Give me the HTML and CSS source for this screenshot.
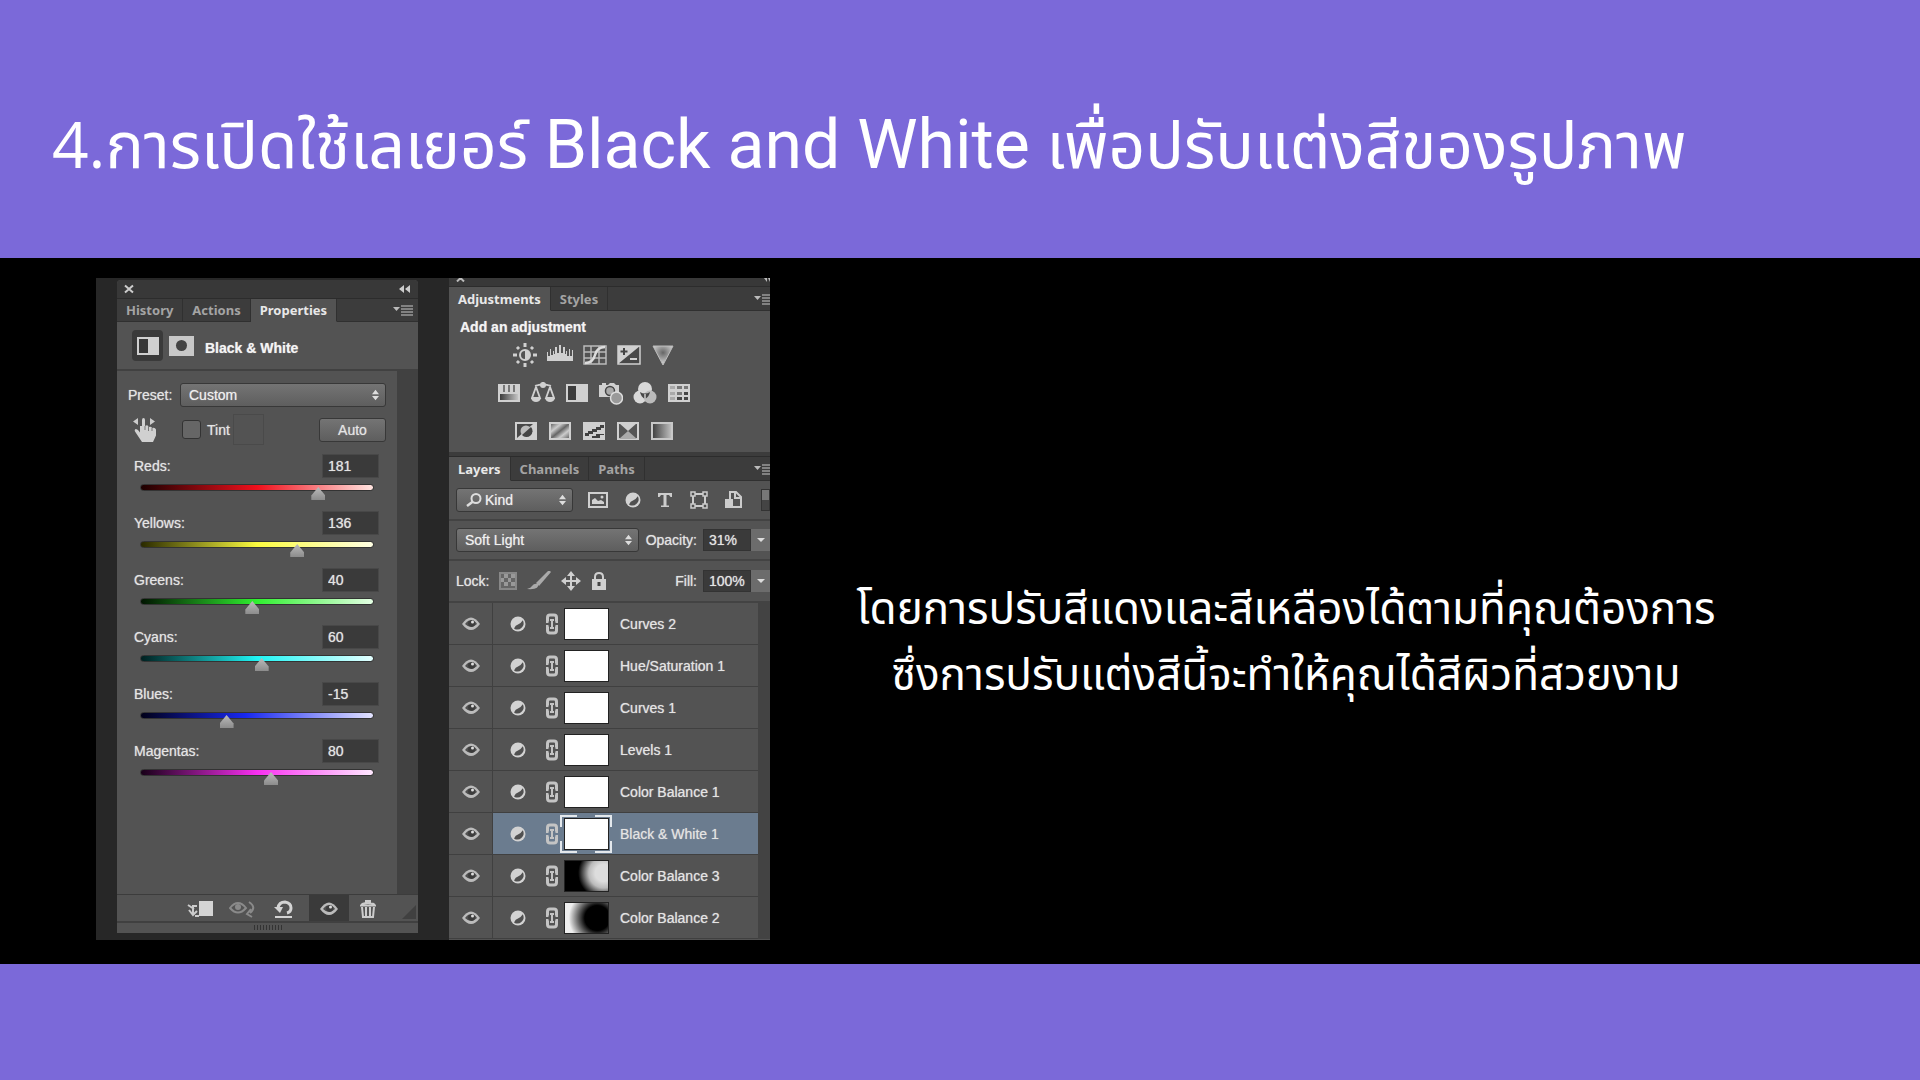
FILE: index.html
```html
<!DOCTYPE html>
<html lang="th">
<head>
<meta charset="utf-8">
<title>Black and White</title>
<link rel="stylesheet" href="styles.css">
</head>
<body>
<svg class="defs" aria-hidden="true">
  <defs>
    <linearGradient id="g-fade"><stop offset="0" stop-color="#3c3c3c"/><stop offset="1" stop-color="#c4c4c4"/></linearGradient>
    <linearGradient id="g-diag" x1="0" y1="0" x2="1" y2="1"><stop offset="0" stop-color="#555"/><stop offset=".3" stop-color="#ccc"/><stop offset=".5" stop-color="#666"/><stop offset=".7" stop-color="#ccc"/><stop offset="1" stop-color="#555"/></linearGradient>
    <radialGradient id="g-tri" cx=".5" cy=".35" r=".6"><stop offset="0" stop-color="#666"/><stop offset="1" stop-color="#d4d4d4"/></radialGradient>
    <symbol id="eye" viewBox="0 0 18 14"><path d="M0 7q9-13 18 0q-9 12-18 0z" fill="#bbb"/><path d="M3 7q2-3 4-3.500v5q2 3 5-1V4q2 1 3 3q-6 6-12 0z" fill="#505050"/><circle cx="9.500" cy="6.500" r="3.400" fill="#3c3c3c"/><circle cx="10.500" cy="5" r="1.500" fill="#ddd"/></symbol>
    <symbol id="adj" viewBox="0 0 16 16"><circle cx="8" cy="8" r="7.500" fill="#d2d2d2"/><path d="M12.800 4.200A6.200 6.200 0 0 1 4 12.400q1.500-3 4-3.800t4.800-4.400z" fill="#505050"/></symbol>
    <symbol id="link" viewBox="0 0 14 22"><path d="M3.500 8.500H2.500V4.500Q2.500 2 5 2h4q2.500 0 2.500 2.500v4h-1M3.500 13.500h-1v4Q2.500 20 5 20h4q2.500 0 2.500-2.500v-4h-1" fill="none" stroke="#c4c4c4" stroke-width="3"/><path d="M7 6v10M5 7h4M5 15h4" stroke="#c4c4c4" stroke-width="2"/></symbol>
    <symbol id="menu" viewBox="0 0 20 14"><path d="M0 4h7L3.500 8z" fill="#bbb"/><path d="M8 3h12M8 6h12M8 9h12M8 12h12" stroke="#999" stroke-width="1.400"/></symbol>
    <symbol id="updown" viewBox="0 0 8 12"><path d="M0 5L4 0l4 5zM0 7h8l-4 5z" fill="#ddd"/></symbol>
  </defs>
</svg>

<header class="banner">
  <h1>4.การเปิดใช้เลเยอร์ <span class="latin">Black and White</span> เพื่อปรับแต่งสีของรูปภาพ</h1>
</header>

<main class="stage">
  <div class="workspace">
    <section class="panel properties">
      <div class="titlebar">
        <button class="bare" aria-label="Close"><svg width="10" height="10" viewBox="0 0 10 10"><path d="M1 1.500l8 7M9 1.500l-8 7" stroke="#ccc" stroke-width="2"/></svg></button>
        <button class="bare" aria-label="Collapse"><svg width="12" height="8" viewBox="0 0 12 8"><path d="M5 0v8L0 4zM11 0v8L6 4z" fill="#ccc"/></svg></button>
      </div>
      <nav class="tabs">
        <button>History</button><button>Actions</button><button class="active">Properties</button>
        <button class="menu" aria-label="Menu"><svg width="20" height="14"><use href="#menu"/></svg></button>
      </nav>
      <div class="kind">
        <span class="well"><svg width="24" height="20" viewBox="0 0 24 20"><rect x="1" y="1" width="22" height="18" fill="#d0d0d0"/><rect x="3" y="3" width="9" height="14" fill="#383838"/></svg></span>
        <svg width="25" height="20" viewBox="0 0 25 20"><rect width="25" height="20" fill="#c8c8c8"/><circle cx="12.500" cy="9.500" r="5.500" fill="#444"/></svg>
        <h2>Black &amp; White</h2>
      </div>
      <div class="scroller">
        <div class="controls">
          <div class="row preset">
            <label for="preset">Preset:</label>
            <span class="select"><select id="preset"><option>Custom</option></select><svg width="7" height="12"><use href="#updown"/></svg></span>
          </div>
          <div class="row tint">
            <svg class="hand" width="24" height="26" viewBox="0 0 24 26"><path d="M5 1v7L0 4.500zM17 1v7l5-3.500z" fill="#ccc"/><path d="M9 14V3q0-2 1.500-2T12 3v6q3-2 3.500 1 3-1 3.500 1 3-1 4 1.500v6l-3 6.500H9L2 14.500q-1-2 1-2.500 2 0 4 3.500V9h2z" fill="#d0d0d0"/><path d="M12 9v4M15.500 10v4M19 11v3" stroke="#777"/></svg>
            <label class="check"><input type="checkbox">Tint</label>
            <span class="swatch"></span>
            <button class="auto">Auto</button>
          </div>
          <div class="channel reds"><label for="reds">Reds:</label><input id="reds" type="text" value="181"><div class="slider"><span class="track"></span><input type="range" aria-label="Reds level" min="-200" max="300" value="181"></div></div>
          <div class="channel yellows"><label for="yellows">Yellows:</label><input id="yellows" type="text" value="136"><div class="slider"><span class="track"></span><input type="range" aria-label="Yellows level" min="-200" max="300" value="136"></div></div>
          <div class="channel greens"><label for="greens">Greens:</label><input id="greens" type="text" value="40"><div class="slider"><span class="track"></span><input type="range" aria-label="Greens level" min="-200" max="300" value="40"></div></div>
          <div class="channel cyans"><label for="cyans">Cyans:</label><input id="cyans" type="text" value="60"><div class="slider"><span class="track"></span><input type="range" aria-label="Cyans level" min="-200" max="300" value="60"></div></div>
          <div class="channel blues"><label for="blues">Blues:</label><input id="blues" type="text" value="-15"><div class="slider"><span class="track"></span><input type="range" aria-label="Blues level" min="-200" max="300" value="-15"></div></div>
          <div class="channel magentas"><label for="magentas">Magentas:</label><input id="magentas" type="text" value="80"><div class="slider"><span class="track"></span><input type="range" aria-label="Magentas level" min="-200" max="300" value="80"></div></div>
        </div>
      </div>
      <div class="toolbar">
        <button aria-label="Clip to layer"><svg width="27" height="18" viewBox="0 0 27 18"><rect x="12" y="1" width="14" height="15" fill="#d4d4d4"/><path d="M1 5l6 4M10 6H6v9M2 10l4 5 4-4M8 16h4" fill="none" stroke="#ccc" stroke-width="2"/></svg></button>
        <button aria-label="View previous state"><svg width="27" height="18" viewBox="0 0 27 18"><path d="M1 8q8-10 16 0q-8 9-16 0z" fill="none" stroke="#8a8a8a" stroke-width="2"/><circle cx="9" cy="7" r="3" fill="#8a8a8a"/><path d="M20 2q8 5 1 11M22 9l-4 5 5 3" fill="none" stroke="#8a8a8a" stroke-width="2"/></svg></button>
        <button aria-label="Reset"><svg width="20" height="18" viewBox="0 0 20 18"><path d="M4 8Q5 2 11 2q6 1 6 6 0 4-4 5" fill="none" stroke="#d4d4d4" stroke-width="3"/><path d="M0 7h9l-3 6z" fill="#d4d4d4"/><path d="M1 17h17" stroke="#d4d4d4" stroke-width="2"/></svg></button>
        <button class="on" aria-label="Visibility"><svg width="18" height="14"><use href="#eye"/></svg></button>
        <button aria-label="Delete"><svg width="16" height="18" viewBox="0 0 16 18"><path d="M1 5.500Q2 3 8 3t7 2.500zM6 3V1h4v2" fill="none" stroke="#ccc" stroke-width="2"/><path d="M2 7l1 10h10l1-10M6 7v9M10 7v9" fill="none" stroke="#ccc" stroke-width="2"/></svg></button>
        <svg class="grip" width="14" height="14" viewBox="0 0 14 14"><path d="M14 0v14H0z" fill="#404040"/></svg>
      </div>
      <div class="handle"><span></span></div>
    </section>

    <section class="panel stack">
      <div class="titlebar cut">
        <svg width="9" height="4" viewBox="0 0 9 4"><path d="M1 3.500L4.500 0 8 3.500" fill="none" stroke="#bbb" stroke-width="2"/></svg>
        <svg width="6" height="4" viewBox="0 0 6 4"><path d="M0 0h3v4zM4 0h2v4z" fill="#bbb"/></svg>
      </div>
      <nav class="tabs">
        <button class="active">Adjustments</button><button>Styles</button>
        <button class="menu" aria-label="Menu"><svg width="16" height="14" viewBox="0 0 16 14"><use href="#menu" width="20" height="14"/></svg></button>
      </nav>
      <div class="adjustments">
        <h2>Add an adjustment</h2>
        <div class="icons">
          <svg viewBox="0 0 24 24"><circle cx="12" cy="12" r="5" fill="none" stroke="#d0d0d0" stroke-width="2"/><path d="M12 7a5 5 0 0 1 0 10z" fill="#d0d0d0"/><path d="M12 0v4M12 20v4M0 12h4M20 12h4M4 4l2 2M18 18l2 2M4 20l2-2M18 6l2-2" stroke="#d0d0d0" stroke-width="3"/></svg>
          <svg viewBox="0 0 26 24" class="wide"><path d="M0 18V9h1v4h2V6h1v6h2V8h1v3h1V4h2v6h2V2h2v8h2V4h2v7h1V8h1v5h2V6h1v7h2V7h1v11z" fill="#d0d0d0"/></svg>
          <svg viewBox="0 0 24 24"><path d="M1 3h22v18H1zM1 9h22M1 15h22M8 3v18M16 3v18" fill="none" stroke="#bbb" stroke-width="1.500"/><path d="M2 20q8 0 10-8t10-8" fill="none" stroke="#ddd" stroke-width="2.500"/></svg>
          <svg viewBox="0 0 24 24"><rect x="1" y="3" width="22" height="18" fill="#484848" stroke="#d0d0d0" stroke-width="1.500"/><path d="M1 21V3h22z" fill="#d0d0d0"/><path d="M7 5v7M3.500 8.500h7" stroke="#444" stroke-width="2"/><path d="M13 16h7" stroke="#d0d0d0" stroke-width="2"/></svg>
          <svg viewBox="0 0 24 24"><path d="M2 3h20L12 22z" fill="url(#g-tri)" stroke="#bbb"/></svg>
        </div>
        <div class="icons">
          <svg viewBox="0 0 24 24"><rect x="1" y="3" width="22" height="18" fill="#d0d0d0"/><path d="M7 4v7M12 4v7M17 4v7" stroke="#777" stroke-width="2"/><rect x="3" y="13" width="18" height="6" fill="url(#g-fade)"/></svg>
          <svg viewBox="0 0 24 24"><path d="M12 1v5M4 5q8-3 16 0M5 6L1 17h8zM19 6l-4 11h8z" fill="none" stroke="#d0d0d0" stroke-width="1.800"/><path d="M0 17h10q-1 4-5 4t-5-4zM14 17h10q-1 4-5 4t-5-4z" fill="#d0d0d0"/><circle cx="12" cy="4" r="3" fill="#d0d0d0"/></svg>
          <svg viewBox="0 0 24 24"><rect x="1" y="3" width="22" height="18" fill="#d0d0d0"/><rect x="3" y="5" width="8" height="14" fill="#3c3c3c"/></svg>
          <svg viewBox="0 0 24 24"><path d="M0 4h3V2h4v2h2l2-2h4l2 2h3v12H0z" fill="#d0d0d0"/><circle cx="11" cy="10" r="4.500" fill="#aaa" stroke="#444" stroke-width="1.500"/><circle cx="17.500" cy="17" r="6" fill="#999" stroke="#ddd" stroke-width="1.500"/></svg>
          <svg viewBox="0 0 24 24"><circle cx="12" cy="8" r="7" fill="#d8d8d8"/><circle cx="7" cy="16" r="6.500" fill="#d8d8d8"/><circle cx="17" cy="16" r="6.500" fill="#bbb"/><path d="M7 11q5 3 10 0-1 5-5 7-4-2-5-7z" fill="#484848"/><path d="M12 13v5" stroke="#ccc" stroke-width="1.500"/></svg>
          <svg viewBox="0 0 24 24"><rect x="1" y="3" width="22" height="18" fill="#d0d0d0"/><path d="M3 5h5v3H3zM3 11h5v3H3zM3 16h5v3H3z" fill="#aaa"/><path d="M10 5h5v3h-5zM17 5h4v3h-4zM10 11h5v3h-5z" fill="#777"/><path d="M17 11h4v3h-4zM10 16h5v3h-5zM17 16h4v3h-4z" fill="#444"/></svg>
        </div>
        <div class="icons">
          <svg viewBox="0 0 24 24"><rect x="1" y="3" width="22" height="18" fill="#d0d0d0"/><path d="M3 5h16L3 19z" fill="#484848"/><circle cx="12" cy="12" r="5.500" fill="#bbb"/><path d="M17 8a5.500 5.500 0 0 1-9 8z" fill="#444"/></svg>
          <svg viewBox="0 0 24 24"><rect x="2" y="4" width="20" height="16" fill="url(#g-diag)" stroke="#d0d0d0" stroke-width="2"/></svg>
          <svg viewBox="0 0 24 24"><rect x="1" y="3" width="22" height="18" fill="#d0d0d0"/><path d="M3 14h3v-2h4v-2h4V8h4V6h4v3h-3v2h-4v2h-4v2H7v2H3zM10 19v-2h4v-2h8v1h-4v3z" fill="#404040"/></svg>
          <svg viewBox="0 0 24 24"><rect x="2" y="4" width="20" height="16" fill="#555" stroke="#d0d0d0" stroke-width="2"/><path d="M3 4h18l-9 8z" fill="#d0d0d0"/><path d="M3 20h18l-9-8z" fill="#aaa"/></svg>
          <svg viewBox="0 0 24 24"><rect x="2" y="4" width="20" height="16" fill="url(#g-fade)" stroke="#c8c8c8" stroke-width="2"/></svg>
        </div>
      </div>
      <nav class="tabs">
        <button class="active">Layers</button><button>Channels</button><button>Paths</button>
        <button class="menu" aria-label="Menu"><svg width="16" height="14" viewBox="0 0 16 14"><use href="#menu" width="20" height="14"/></svg></button>
      </nav>
      <div class="bar filter">
        <span class="select find"><svg class="lens" width="16" height="14" viewBox="0 0 16 14"><circle cx="10" cy="5.500" r="4.500" fill="none" stroke="#ddd" stroke-width="2"/><path d="M7 8.500L1 13" stroke="#ddd" stroke-width="2.500"/></svg><select aria-label="Filter type"><option>Kind</option></select><svg width="7" height="12"><use href="#updown"/></svg></span>
        <div class="filters">
          <svg width="20" height="18" viewBox="0 0 20 18"><rect x="1" y="2" width="18" height="14" fill="none" stroke="#d0d0d0" stroke-width="2"/><path d="M4 13V9l3-2 3 3 3-1 3 2v2z" fill="#d0d0d0"/><circle cx="14" cy="6" r="1.500" fill="#d0d0d0"/></svg>
          <svg width="16" height="16"><use href="#adj"/></svg>
          <svg width="16" height="16" viewBox="0 0 16 16"><path d="M1 1h14v4h-1.500L12 3H9.500v10.500H12V15H4v-1.500h2.500V3H4L2.500 5H1z" fill="#ccc"/></svg>
          <svg width="18" height="18" viewBox="0 0 18 18"><path d="M3 3h12v12H3z" fill="none" stroke="#ccc" stroke-width="2"/><path d="M1 1h4v4H1zM13 1h4v4h-4zM1 13h4v4H1zM13 13h4v4h-4z" fill="#505050" stroke="#ccc" stroke-width="1.500"/></svg>
          <svg width="18" height="18" viewBox="0 0 18 18"><path d="M6 8V1h6l5 5v10H9M11 1v6h6" fill="none" stroke="#ccc" stroke-width="2"/><path d="M1 8h8v9H1z" fill="#ccc"/></svg>
        </div>
        <span class="toggle"></span>
      </div>
      <div class="bar">
        <span class="select blend"><select aria-label="Blend mode"><option>Soft Light</option></select><svg width="7" height="12"><use href="#updown"/></svg></span>
        <label class="amount">Opacity:<input type="text" value="31%"></label>
        <button class="drop" aria-label="Opacity slider"><svg width="8" height="4" viewBox="0 0 8 4"><path d="M0 0h8L4 4z" fill="#ddd"/></svg></button>
      </div>
      <div class="bar lock">
        <span>Lock:</span>
        <svg width="18" height="18" viewBox="0 0 18 18"><path d="M1 1h16v16H1z" fill="#666" stroke="#888" stroke-width="2"/><path d="M5 2h4v4H5zM12 2h4v4h-4zM2 6h3v4H2zM9 6h3v4H9zM5 10h4v4H5zM12 10h4v4h-4z" fill="#999"/></svg>
        <svg width="24" height="20" viewBox="0 0 24 20"><path d="M23 0h-2L9 12l3 3L24 1z" fill="#aaa"/><path d="M11 13q2 6-11 5 4-1 5-3 2-3 6-2z" fill="#aaa"/></svg>
        <svg width="20" height="20" viewBox="0 0 20 20"><path d="M10 2v16M2 10h16" stroke="#d0d0d0" stroke-width="2"/><path d="M10 0l4 5H6zM10 20l-4-5h8zM0 10l5-4v8zM20 10l-5 4V6z" fill="#d0d0d0"/></svg>
        <svg width="16" height="18" viewBox="0 0 16 18"><path d="M4 9V5q0-4 4-4t4 4v4" fill="none" stroke="#d0d0d0" stroke-width="2"/><path d="M1 7h14v11H1z" fill="#d0d0d0"/><path d="M8 10v4" stroke="#444" stroke-width="3"/></svg>
        <label class="amount">Fill:<input type="text" value="100%"></label>
        <button class="drop" aria-label="Fill slider"><svg width="8" height="4" viewBox="0 0 8 4"><path d="M0 0h8L4 4z" fill="#ddd"/></svg></button>
      </div>
      <ul class="layers">
        <li><button class="see" aria-label="Toggle layer"><svg width="18" height="14"><use href="#eye"/></svg></button><div class="layer"><svg width="16" height="16"><use href="#adj"/></svg><svg width="14" height="22"><use href="#link"/></svg><span class="mask"></span><span>Curves 2</span></div></li>
        <li><button class="see" aria-label="Toggle layer"><svg width="18" height="14"><use href="#eye"/></svg></button><div class="layer"><svg width="16" height="16"><use href="#adj"/></svg><svg width="14" height="22"><use href="#link"/></svg><span class="mask"></span><span>Hue/Saturation 1</span></div></li>
        <li><button class="see" aria-label="Toggle layer"><svg width="18" height="14"><use href="#eye"/></svg></button><div class="layer"><svg width="16" height="16"><use href="#adj"/></svg><svg width="14" height="22"><use href="#link"/></svg><span class="mask"></span><span>Curves 1</span></div></li>
        <li><button class="see" aria-label="Toggle layer"><svg width="18" height="14"><use href="#eye"/></svg></button><div class="layer"><svg width="16" height="16"><use href="#adj"/></svg><svg width="14" height="22"><use href="#link"/></svg><span class="mask"></span><span>Levels 1</span></div></li>
        <li><button class="see" aria-label="Toggle layer"><svg width="18" height="14"><use href="#eye"/></svg></button><div class="layer"><svg width="16" height="16"><use href="#adj"/></svg><svg width="14" height="22"><use href="#link"/></svg><span class="mask"></span><span>Color Balance 1</span></div></li>
        <li><button class="see" aria-label="Toggle layer"><svg width="18" height="14"><use href="#eye"/></svg></button><div class="layer selected"><svg width="16" height="16"><use href="#adj"/></svg><svg width="14" height="22"><use href="#link"/></svg><span class="mask"><svg class="corners" width="52" height="38" viewBox="0 0 52 38"><path d="M1 12V1h16M35 1h16v11M51 26v11H35M17 37H1V26" fill="none" stroke="#e4e8ec" stroke-width="2"/></svg></span><span>Black &amp; White 1</span></div></li>
        <li><button class="see" aria-label="Toggle layer"><svg width="18" height="14"><use href="#eye"/></svg></button><div class="layer"><svg width="16" height="16"><use href="#adj"/></svg><svg width="14" height="22"><use href="#link"/></svg><span class="mask right"></span><span>Color Balance 3</span></div></li>
        <li><button class="see" aria-label="Toggle layer"><svg width="18" height="14"><use href="#eye"/></svg></button><div class="layer"><svg width="16" height="16"><use href="#adj"/></svg><svg width="14" height="22"><use href="#link"/></svg><span class="mask left"></span><span>Color Balance 2</span></div></li>
      </ul>
    </section>
  </div>
  <p class="note">โดยการปรับสีแดงและสีเหลืองได้ตามที่คุณต้องการ<br>ซึ่งการปรับแต่งสีนี้จะทำให้คุณได้สีผิวที่สวยงาม</p>
</main>
</body>
</html>
```
FILE: styles.css
```css
* { box-sizing: border-box; }
body {
  margin: 0;
  min-height: 100vh;
  display: flex;
  flex-direction: column;
  background: #7b69d9;
  color: #fff;
  font: 14px/18px "Liberation Sans", Arial, sans-serif;
}
.defs { position: absolute; width: 0; height: 0; }
svg { display: block; flex: none; }
button, input, select { font: inherit; color: inherit; text-shadow: inherit; margin: 0; }
button { border: 0; padding: 0; background: none; display: flex; align-items: center; justify-content: center; }
h1, h2, p, ul { margin: 0; padding: 0; }
h2 { font-size: 14px; font-weight: 700; color: #f4f4f4; }

.banner { height: 258px; padding: 88px 52px 0; }
.banner h1 { font: 400 64px/112px "Open Sans", "Noto Sans Thai", sans-serif; white-space: nowrap; }
.latin { font: 400 68px/112px Roboto, sans-serif; }

.stage {
  display: grid;
  grid-template-columns: 674px 1fr;
  padding: 20px 118px 24px 96px;
  background: #000;
}
.note {
  align-self: center;
  padding-top: 62px;
  text-align: center;
  font: 400 44px/66px "Open Sans", "Noto Sans Thai", sans-serif;
  white-space: nowrap;
}

.workspace {
  display: grid;
  grid-template-columns: 301px 321px;
  justify-content: space-between;
  height: 662px;
  padding-left: 21px;
  overflow: hidden;
  background: #272727;
  color: #e4e4e4;
  text-shadow: 0 0 1px #bbb;
}
.panel { display: flex; flex-direction: column; background: #535353; }
.properties { margin: 2px 0 7px; border-radius: 4px 4px 0 0; overflow: hidden; }
.titlebar { display: flex; justify-content: space-between; align-items: center; height: 18px; padding: 0 7px; background: #383838; }
.titlebar.cut { height: 8px; padding: 0 0 4px 7px; }

.tabs { display: flex; height: 24px; background: #3c3c3c; border-top: 1px solid #2c2c2c; font: 700 13px/22px "Noto Sans", sans-serif; text-shadow: none; }
.tabs button { padding: 0 9px; color: #a4a4a4; border-right: 1px solid #303030; border-bottom: 1px solid #303030; }
.tabs .active { color: #e8e8e8; background: #535353; border-bottom-color: #535353; }
.tabs .menu { flex: 1; justify-content: flex-end; padding: 0 5px 0 0; border-right: 0; }

.kind { display: flex; align-items: center; gap: 6px; height: 49px; padding: 0 15px; border-bottom: 2px solid #414141; }
.kind h2 { padding: 5px 0 0 5px; }
.well { display: grid; place-items: center; width: 31px; height: 31px; background: #3a3a3a; border-radius: 4px; }

.scroller { flex: 1; padding-right: 21px; background: #414141; }
.controls { height: 100%; padding: 11px 11px 0 11px; background: #535353; }
.row { display: flex; align-items: center; height: 25px; }
.preset { justify-content: space-between; }
.tint { margin: 10px 0 12px; padding-left: 5px; }
.check { display: flex; align-items: center; gap: 6px; padding-left: 25px; }
.check input { appearance: none; width: 19px; height: 19px; border: 1px solid #333; border-radius: 3px; background: #666; }
.swatch { width: 31px; height: 31px; margin-left: 3px; border: 1px solid #4a4a4a; }
.auto { width: 67px; height: 24px; margin-left: auto; }
.select, .auto { border: 1px solid #383838; border-radius: 3px; background: linear-gradient(#747474, #5e5e5e); }
.select { display: flex; align-items: center; width: 206px; height: 24px; padding: 0 6px 0 8px; }
.select select { appearance: none; flex: 1; min-width: 0; padding: 0; border: 0; background: none; color: #f0f0f0; }

.channel { display: grid; grid-template-columns: 1fr 57px; align-content: start; height: 57px; padding: 0 7px 0 6px; }
.channel label { padding-top: 3px; }
.channel input[type="text"] { width: 57px; height: 24px; padding: 0 5px; border: 1px solid #484848; background: #3a3a3a; }
.slider { grid-column: 1 / 3; display: grid; margin: 6px -2px 0 -1px; }
.track, .slider input { grid-area: 1 / 1; }
.track { height: 7px; margin: 0 7px; border: 1px solid #333; border-radius: 4px; }
.slider input { appearance: none; width: 100%; height: 16px; background: none; }
.slider input::-webkit-slider-thumb {
  appearance: none;
  width: 14px;
  height: 13px;
  margin-top: 3px;
  background: linear-gradient(#bbb, #8c8c8c);
  clip-path: polygon(50% 0, 100% 65%, 100% 100%, 0 100%, 0 65%);
}
.reds .track { background: linear-gradient(90deg, #1c0000, #f0101c 50%, #ffe4e0); }
.yellows .track { background: linear-gradient(90deg, #2a2a00, #fcfc40 50%, #ffffe4); }
.greens .track { background: linear-gradient(90deg, #001400, #30f030 50%, #e4ffe4); }
.cyans .track { background: linear-gradient(90deg, #002020, #20f4f4 50%, #e4ffff); }
.blues .track { background: linear-gradient(90deg, #000018, #1828f0 45%, #e4e4ff); }
.magentas .track { background: linear-gradient(90deg, #180018, #f830f0 50%, #ffe8ff); }

.toolbar { display: flex; align-items: stretch; justify-content: flex-end; height: 27px; border-top: 1px solid #3c3c3c; }
.toolbar button { width: 42px; padding-top: 2px; }
.toolbar .on { width: 40px; margin-left: 4px; background: #3a3a3a; }
.toolbar .on + button { width: 38px; }
.grip { align-self: flex-end; margin: 0 2px 2px 15px; }
.handle { display: grid; justify-content: center; height: 12px; padding-top: 2px; border-top: 2px solid #404040; }
.handle span { width: 28px; height: 5px; background: repeating-linear-gradient(90deg, #333 0 1px, #535353 1px 3px); }

.stack { min-width: 0; }
.stack .tabs .menu { padding-right: 0; }
.stack .tabs { flex: none; height: 25px; }
.adjustments { height: 145px; padding: 7px 0 0 11px; border-bottom: 4px solid #3c3c3c; }
.icons { display: flex; justify-content: center; gap: 10px; height: 38px; padding-right: 42px; align-items: center; }
.adjustments h2 { line-height: 18px; }
.icons svg { width: 24px; height: 24px; }
.icons .wide { width: 26px; }

.bar { display: flex; align-items: center; flex: none; height: 40px; padding-left: 7px; border-bottom: 2px solid #434343; }
.bar .find { width: 117px; }
.lens { margin: 0 3px 0 1px; }
.blend { width: 183px; }
.filters { display: flex; flex: 1; align-items: center; justify-content: space-between; padding: 0 19px 0 15px; }
.toggle { width: 9px; height: 22px; border: 1px solid #333; background: linear-gradient(#777 50%, #444 50%); }
.amount { display: flex; align-items: center; gap: 6px; margin-left: auto; }
.amount input { width: 48px; height: 22px; padding: 0 0 0 5px; border: 1px solid #333; background: #3a3a3a; }
.drop { width: 19px; height: 22px; background: #6c6c6c; }
.lock { gap: 10px; height: 42px; }
.lock .drop { margin-left: -10px; }

.layers { list-style: none; padding-right: 12px; background: #434343; }
.layers li { display: grid; grid-template-columns: 44px 1fr; height: 42px; }
.see { background: #535353; border-right: 1px solid #404040; border-bottom: 1px solid #404040; }
.layer { display: flex; align-items: center; padding-left: 17px; background: #535353; border-bottom: 1px solid #404040; }
.layer svg + svg { margin-left: 19px; }
.selected { background: #6b7c8f; }
.mask { position: relative; width: 45px; height: 32px; margin: 0 11px 0 5px; border: 1px solid #222; background: #fff; }
.corners { position: absolute; left: -5px; top: -4px; }
.mask.right { background: radial-gradient(circle at 90% 40%, #ddd 20%, #bbb 35%, #000 60%); }
.mask.left { background: radial-gradient(circle at 75% 50%, #000 35%, #eee 80%); }
```
